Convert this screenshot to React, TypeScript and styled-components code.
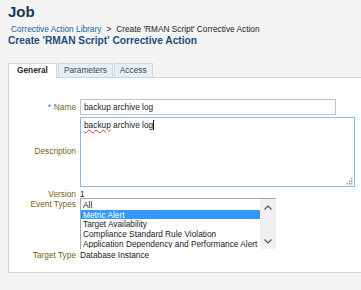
import React from "react";
import styled, { createGlobalStyle } from "styled-components";

const GlobalStyle = createGlobalStyle`
  html, body {
    margin: 0;
    padding: 0;
    background: #f4f4f4;
    font-family: "Liberation Sans", Arial, sans-serif;
    overflow: hidden;
  }
`;

const Page = styled.div`
  width: 361px;
  height: 290px;
  padding: 0 0 0 8px;
  box-sizing: border-box;
  background: #f4f4f4;
`;

const JobTitle = styled.h1`
  margin: 0;
  padding-top: 3px;
  font-size: 15px;
  line-height: 18px;
  font-weight: bold;
  color: #1f3553;
`;

const Crumbs = styled.div`
  display: flex;
  align-items: center;
  gap: 5px;
  margin: 3px 0 0 3px;
  font-size: 8.3px;
  line-height: 10px;
  color: #222;
`;

const CrumbLink = styled.span`
  color: #25609c;
`;

const PageHeading = styled.h2`
  margin: 1px 0 0;
  font-size: 10.2px;
  line-height: 12px;
  font-weight: bold;
  color: #1d4c7c;
`;

const Tabs = styled.div`
  display: flex;
  margin-top: 16px;
  height: 14px;
`;

const Tab = styled.div<{ $active?: boolean }>`
  box-sizing: border-box;
  height: ${(p) => (p.$active ? "15px" : "14px")};
  padding: 0 ${(p) => (p.$active ? "8px" : "5px")};
  font-size: 8.3px;
  line-height: 13px;
  font-weight: ${(p) => (p.$active ? "bold" : "normal")};
  color: ${(p) => (p.$active ? "#2a2a2a" : "#3a4a5a")};
  background: ${(p) => (p.$active ? "#ffffff" : "#e6eef6")};
  border: 1px solid #c9d6e6;
  border-bottom: none;
  margin-right: 1px;
  position: relative;
  z-index: 1;
`;

const Panel = styled.div`
  background: #fff;
  border-top: 1px solid #c6d3e4;
  border-left: 1px solid #c6d3e4;
  border-bottom: 1px solid #c6d3e4;
  height: 196px;
  box-sizing: border-box;
  padding-top: 21px;
`;

const Form = styled.div`
  display: grid;
  grid-template-columns: 67px 1fr;
  column-gap: 4px;
  align-items: center;
  font-size: 8.3px;
  color: #222;
`;

const Label = styled.div`
  text-align: right;
  color: #7a6320;
  line-height: 10px;
`;

const Req = styled.span`
  color: #2f7fa8;
  margin-right: 3px;
`;

const TextInput = styled.div`
  box-sizing: border-box;
  width: 256px;
  height: 16px;
  border: 1px solid #c4c4c4;
  padding: 0 3px;
  line-height: 14px;
  background: #fff;
`;

const TextArea = styled.div`
  box-sizing: border-box;
  position: relative;
  width: 275px;
  height: 70px;
  margin-top: 2px;
  border: 1px solid #86b9ec;
  padding: 2px 3px;
  line-height: 10px;
  background: #fff;
`;

const Squiggle = styled.span`
  text-decoration: underline wavy #e0303a;
  text-decoration-thickness: 1px;
  text-underline-offset: 1px;
`;

const Caret = styled.span`
  display: inline-block;
  width: 1px;
  height: 10px;
  background: #111;
  vertical-align: -2px;
`;

const Grip = styled.svg`
  position: absolute;
  right: 1px;
  bottom: 1px;
`;

const Value = styled.div`
  line-height: 10px;
`;

const ListBox = styled.div`
  box-sizing: border-box;
  display: flex;
  width: 196px;
  height: 51px;
  margin-top: -1px;
  border: 1px solid #a8a8a8;
  border-right: none;
  border-bottom: none;
  background: #fff;
`;

const Options = styled.div`
  flex: 1;
  min-width: 0;
  padding-top: 1px;
`;

const Option = styled.div<{ $selected?: boolean }>`
  height: 9.7px;
  line-height: 10px;
  padding-left: 2px;
  white-space: nowrap;
  overflow: hidden;
  color: ${(p) => (p.$selected ? "#fff" : "#1a1a1a")};
  background: ${(p) => (p.$selected ? "#3399ff" : "transparent")};
`;

const ScrollBar = styled.div`
  width: 16px;
  flex: none;
  background: #f0f0f0;
  display: flex;
  flex-direction: column;
  justify-content: space-between;
  align-items: center;
  padding: 6px 0 5px;
  box-sizing: border-box;
`;

const Chevron = ({ up }: { up?: boolean }) => (
  <svg width="8" height="5" viewBox="0 0 8 5">
    <path
      d={up ? "M0.5 4.5 L4 1 L7.5 4.5" : "M0.5 0.5 L4 4 L7.5 0.5"}
      fill="none"
      stroke="#555"
      strokeWidth="1.2"
    />
  </svg>
);

const Row = styled.div`
  display: contents;
`;

const Spacer = styled.div<{ $h: number }>`
  grid-column: 1 / -1;
  height: ${(p) => p.$h}px;
`;

const TopLabel = styled(Label)`
  align-self: start;
  padding-top: 0;
`;

export default function App() {
  return (
    <Page>
      <GlobalStyle />
      <JobTitle>Job</JobTitle>
      <Crumbs>
        <CrumbLink>Corrective Action Library</CrumbLink>
        <span>&gt;</span>
        <span>Create 'RMAN Script' Corrective Action</span>
      </Crumbs>
      <PageHeading>Create 'RMAN Script' Corrective Action</PageHeading>
      <Tabs>
        <Tab $active>General</Tab>
        <Tab>Parameters</Tab>
        <Tab>Access</Tab>
      </Tabs>
      <Panel>
        <Form>
          <Row>
            <Label>
              <Req>*</Req>Name
            </Label>
            <TextInput>backup archive log</TextInput>
          </Row>
          <Row>
            <Label>Description</Label>
            <TextArea>
              <Squiggle>backup</Squiggle> archive log
              <Caret />
              <Grip width="7" height="7" viewBox="0 0 7 7">
                <g fill="#9a9a9a">
                  <rect x="5" y="0" width="1.5" height="1.5" />
                  <rect x="3" y="2.5" width="1.5" height="1.5" />
                  <rect x="5" y="2.5" width="1.5" height="1.5" />
                  <rect x="0.5" y="5" width="1.5" height="1.5" />
                  <rect x="3" y="5" width="1.5" height="1.5" />
                  <rect x="5" y="5" width="1.5" height="1.5" />
                </g>
              </Grip>
            </TextArea>
          </Row>
          <Spacer $h={2} />
          <Row>
            <Label>Version</Label>
            <Value>1</Value>
          </Row>
          <Row>
            <TopLabel>Event Types</TopLabel>
            <ListBox>
              <Options>
                <Option>All</Option>
                <Option $selected>Metric Alert</Option>
                <Option>Target Availability</Option>
                <Option>Compliance Standard Rule Violation</Option>
                <Option>Application Dependency and Performance Alert</Option>
              </Options>
              <ScrollBar>
                <Chevron up />
                <Chevron />
              </ScrollBar>
            </ListBox>
          </Row>
          <Spacer $h={1} />
          <Row>
            <Label>Target Type</Label>
            <Value>Database Instance</Value>
          </Row>
        </Form>
      </Panel>
    </Page>
  );
}
